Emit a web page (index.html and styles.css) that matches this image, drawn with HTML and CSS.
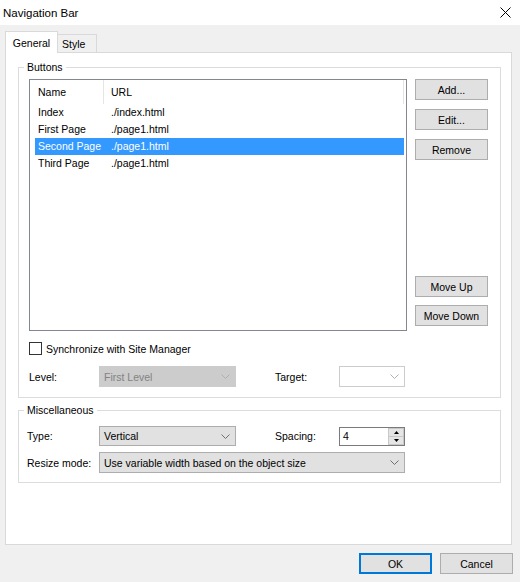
FILE: index.html
```html
<!DOCTYPE html>
<html>
<head>
<meta charset="utf-8">
<link rel="stylesheet" href="styles.css">
</head>
<body>
<div class="titlebar">
  <span class="title">Navigation Bar</span>
  <svg class="close" width="11" height="11" viewBox="0 0 11 11"><path d="M0.5 0.5L10.5 10.5M10.5 0.5L0.5 10.5" stroke="#000" stroke-width="1" fill="none"/></svg>
</div>
<div class="main">
  <div class="tabs">
    <div class="tab tab-active">General</div>
    <div class="tab tab-style">Style</div>
  </div>
  <div class="panel">
    <fieldset class="group group-buttons">
      <legend>Buttons</legend>
      <div class="list-row">
        <div class="list">
          <div class="list-head"><span class="c1">Name</span><span class="c2">URL</span></div>
          <div class="item"><span class="c1">Index</span><span class="c2">./index.html</span></div>
          <div class="item"><span class="c1">First Page</span><span class="c2">./page1.html</span></div>
          <div class="item sel"><span class="c1">Second Page</span><span class="c2">./page1.html</span></div>
          <div class="item"><span class="c1">Third Page</span><span class="c2">./page1.html</span></div>
        </div>
        <div class="btn-col">
          <div class="btn-stack top">
            <button class="btn">Add...</button>
            <button class="btn">Edit...</button>
            <button class="btn">Remove</button>
          </div>
          <div class="btn-stack bottom">
            <button class="btn">Move Up</button>
            <button class="btn">Move Down</button>
          </div>
        </div>
      </div>
      <div class="check"><span class="box"></span><span>Synchronize with Site Manager</span></div>
      <div class="form-row level-row">
        <span class="lbl lbl-a">Level:</span>
        <div class="select select-short disabled"><span>First Level</span><svg width="9" height="5" viewBox="0 0 9 5"><path d="M0.5 0.5L4.5 4.5L8.5 0.5" stroke="#b0b0b0" fill="none"/></svg></div>
        <span class="lbl lbl-b">Target:</span>
        <div class="select select-tiny blank"><span></span><svg width="9" height="5" viewBox="0 0 9 5"><path d="M0.5 0.5L4.5 4.5L8.5 0.5" stroke="#b0b0b0" fill="none"/></svg></div>
      </div>
    </fieldset>
    <fieldset class="group group-misc">
      <legend>Miscellaneous</legend>
      <div class="form-row type-row">
        <span class="lbl lbl-m">Type:</span>
        <div class="select select-short"><span>Vertical</span><svg width="9" height="5" viewBox="0 0 9 5"><path d="M0.5 0.5L4.5 4.5L8.5 0.5" stroke="#707070" fill="none"/></svg></div>
        <span class="lbl lbl-b">Spacing:</span>
        <div class="spin">
          <span class="spin-val">4</span>
          <div class="spin-btns">
            <span class="spin-b"><svg width="5" height="3" viewBox="0 0 5 3"><path d="M2.5 0L5 3H0Z" fill="#000"/></svg></span>
            <span class="spin-b"><svg width="5" height="3" viewBox="0 0 5 3"><path d="M0 0H5L2.5 3Z" fill="#000"/></svg></span>
          </div>
        </div>
      </div>
      <div class="form-row resize-row">
        <span class="lbl lbl-m">Resize mode:</span>
        <div class="select select-wide"><span>Use variable width based on the object size</span><svg width="9" height="5" viewBox="0 0 9 5"><path d="M0.5 0.5L4.5 4.5L8.5 0.5" stroke="#707070" fill="none"/></svg></div>
      </div>
    </fieldset>
  </div>
  <div class="footer">
    <button class="btn default">OK</button>
    <button class="btn">Cancel</button>
  </div>
</div>
</body>
</html>
```
FILE: styles.css
```css
* { box-sizing: border-box; }
html, body { margin: 0; padding: 0; }
body {
  width: 520px;
  height: 582px;
  overflow: hidden;
  background: #f0f0f0;
  font-family: "Liberation Sans", Arial, sans-serif;
  font-size: 10.5px;
  color: #000;
}
.titlebar {
  height: 25px;
  background: #fff;
  display: flex;
  align-items: center;
  justify-content: space-between;
  padding: 0 9px 0 3px;
  font-size: 11.5px;
}
.close { display: block; }
.main { padding: 6px 0 0 5px; }
.tabs { display: flex; align-items: flex-end; height: 21px; }
.tab {
  border: 1px solid #d9d9d9;
  border-bottom: none;
  display: flex;
  align-items: center;
}
.tab-active {
  width: 53px;
  height: 22px;
  margin-bottom: -1px;
  background: #fff;
  justify-content: center;
  position: relative;
  z-index: 1;
}
.tab-style {
  width: 39px;
  height: 18px;
  border-left: none;
  padding-left: 4px;
}
.panel {
  width: 507px;
  height: 493px;
  background: #fff;
  border: 1px solid #d9d9d9;
  padding: 0 0 0 12px;
}
.group {
  width: 483px;
  border: 1px solid #dcdcdc;
  margin: 0;
  min-width: 0;
}
.group legend { padding: 0 3px; line-height: 16px; }
.group-buttons { margin-top: 6px; padding: 4px 0 10px 10px; }
.group-buttons legend { margin-left: -5px; }
.group-misc { margin-top: 4px; padding: 8px 0 9px 8px; }
.group-misc legend { margin-left: -3px; }

.list-row { display: flex; gap: 8px; }
.list {
  width: 378px;
  height: 252px;
  border: 1px solid #828790;
  background: #fff;
}
.list-head { display: flex; height: 24px; }
.list-head span { display: flex; align-items: center; }
.list-head .c1 { width: 74px; padding-left: 8px; border-right: 1px solid #e5e5e5; }
.list-head .c2 { width: 300px; padding-left: 7px; border-right: 1px solid #e5e5e5; }
.item {
  display: flex;
  margin-left: 5px;
  width: 369px;
  height: 17px;
  line-height: 17px;
}
.item .c1 { width: 73px; padding-left: 3px; white-space: nowrap; }
.item .c2 { padding-left: 3px; }
.item.sel { background: #3399ff; color: #fff; }

.btn-col {
  width: 73px;
  display: flex;
  flex-direction: column;
  justify-content: space-between;
  padding-bottom: 5px;
}
.btn-stack { display: flex; flex-direction: column; }
.btn-stack.top { gap: 9px; }
.btn-stack.bottom { gap: 8px; }
.btn {
  width: 73px;
  height: 21px;
  border: 1px solid #adadad;
  background: #e1e1e1;
  font: inherit;
  color: #000;
  padding: 0;
  margin: 0;
  text-align: center;
}
.btn.default { border: 2px solid #0078d7; }

.check {
  display: flex;
  align-items: center;
  height: 13px;
  margin-top: 11px;
  gap: 4px;
}
.box {
  width: 13px;
  height: 13px;
  border: 1px solid #333;
  background: #fff;
}
.form-row { display: flex; align-items: center; }
.level-row { margin-top: 11px; }
.lbl-a { width: 70px; }
.lbl-m { width: 72px; }
.lbl-b { width: 64px; margin-left: 39px; }
.select {
  display: flex;
  align-items: center;
  justify-content: space-between;
  padding: 0 5px 0 4px;
  border: 1px solid #adadad;
  background: #e1e1e1;
  height: 21px;
}
.select svg { display: block; flex: none; }
.select-short { width: 137px; }
.select-tiny { width: 66px; }
.select-wide { width: 306px; }
.select.disabled { background: #cccccc; border-color: #cccccc; color: #838383; }
.select.blank { background: #fff; border-color: #cccccc; }
.type-row .select { height: 20px; }
.resize-row { margin-top: 6px; }

.spin {
  width: 66px;
  height: 19px;
  display: flex;
  border: 1px solid #7a7a7a;
  background: #fff;
}
.spin-val { flex: 1; padding-left: 3px; display: flex; align-items: center; }
.spin-btns { width: 16px; display: flex; flex-direction: column; }
.spin-b {
  flex: 1;
  display: flex;
  align-items: center;
  justify-content: center;
  background: #e5e5e5;
  border: 1px solid #c8c8c8;
}
.spin-b + .spin-b { border-top: none; }
.spin-b svg { display: block; }

.footer {
  display: flex;
  justify-content: flex-end;
  gap: 8px;
  padding-right: 7px;
  margin-top: 8px;
}
```
